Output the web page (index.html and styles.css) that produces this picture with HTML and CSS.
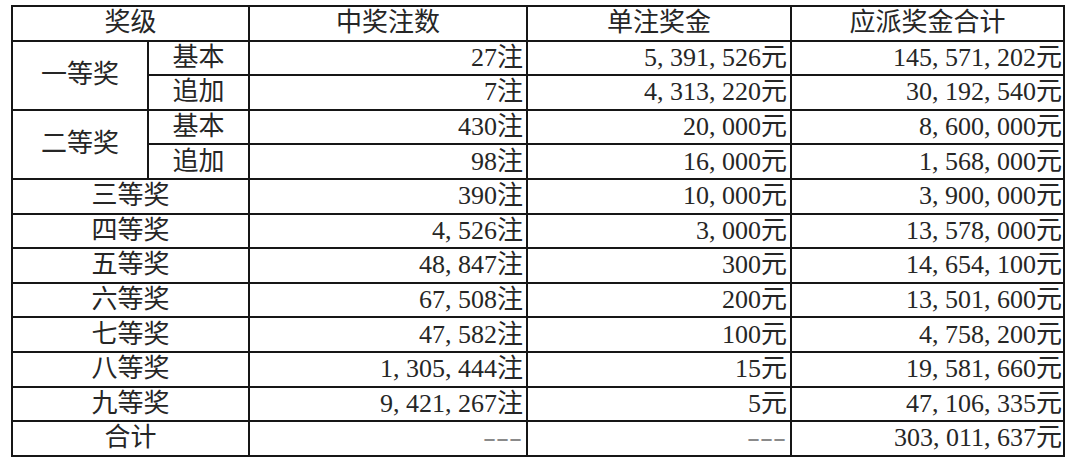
FILE: index.html
```html
<!DOCTYPE html>
<html lang="zh-CN">
<head>
<meta charset="utf-8">
<title>奖级</title>
<link rel="stylesheet" href="styles.css">
</head>
<body>
<div class="table">
  <div class="cell c span2">奖级</div>
  <div class="cell c">中奖注数</div>
  <div class="cell c">单注奖金</div>
  <div class="cell c">应派奖金合计</div>

  <div class="cell c rspan2">一等奖</div>
  <div class="cell c">基本</div>
  <div class="cell r n1">27注</div>
  <div class="cell r n2">5, 391, 526元</div>
  <div class="cell r n3">145, 571, 202元</div>
  <div class="cell c">追加</div>
  <div class="cell r n1">7注</div>
  <div class="cell r n2">4, 313, 220元</div>
  <div class="cell r n3">30, 192, 540元</div>

  <div class="cell c rspan2">二等奖</div>
  <div class="cell c">基本</div>
  <div class="cell r n1">430注</div>
  <div class="cell r n2">20, 000元</div>
  <div class="cell r n3">8, 600, 000元</div>
  <div class="cell c">追加</div>
  <div class="cell r n1">98注</div>
  <div class="cell r n2">16, 000元</div>
  <div class="cell r n3">1, 568, 000元</div>

  <div class="cell c span2">三等奖</div>
  <div class="cell r n1">390注</div>
  <div class="cell r n2">10, 000元</div>
  <div class="cell r n3">3, 900, 000元</div>

  <div class="cell c span2">四等奖</div>
  <div class="cell r n1">4, 526注</div>
  <div class="cell r n2">3, 000元</div>
  <div class="cell r n3">13, 578, 000元</div>

  <div class="cell c span2">五等奖</div>
  <div class="cell r n1">48, 847注</div>
  <div class="cell r n2">300元</div>
  <div class="cell r n3">14, 654, 100元</div>

  <div class="cell c span2">六等奖</div>
  <div class="cell r n1">67, 508注</div>
  <div class="cell r n2">200元</div>
  <div class="cell r n3">13, 501, 600元</div>

  <div class="cell c span2">七等奖</div>
  <div class="cell r n1">47, 582注</div>
  <div class="cell r n2">100元</div>
  <div class="cell r n3">4, 758, 200元</div>

  <div class="cell c span2">八等奖</div>
  <div class="cell r n1">1, 305, 444注</div>
  <div class="cell r n2">15元</div>
  <div class="cell r n3">19, 581, 660元</div>

  <div class="cell c span2">九等奖</div>
  <div class="cell r n1">9, 421, 267注</div>
  <div class="cell r n2">5元</div>
  <div class="cell r n3">47, 106, 335元</div>

  <div class="cell c span2">合计</div>
  <div class="cell r n1"><span class="dash">---</span></div>
  <div class="cell r n2"><span class="dash">---</span></div>
  <div class="cell r n3">303, 011, 637元</div>
</div>
</body>
</html>
```
FILE: styles.css
```css
html, body {
  margin: 0;
  padding: 0;
  background: #ffffff;
}

body {
  padding: 5px 0 0 11px;
  font-family: "Liberation Serif", "Noto Sans CJK SC", serif;
  font-size: 26px;
  color: #262626;
}

.table {
  display: grid;
  width: 1054px;
  box-sizing: border-box;
  grid-template-columns: 134px 99px 276px 262px 271px;
  grid-template-rows: repeat(13, 32.6px);
  gap: 2px;
  padding: 2px;
  background: #161616;
}

.cell {
  background: #ffffff;
  display: flex;
  align-items: center;
  white-space: nowrap;
  line-height: 1;
}

.c {
  justify-content: center;
}

.r {
  justify-content: flex-end;
}

.n1,
.n2 {
  padding-right: 3px;
}

.n3 {
  padding-right: 1px;
}

.span2 {
  grid-column: span 2;
}

.rspan2 {
  grid-row: span 2;
}

.dash {
  display: inline-block;
  color: #8a8a8a;
  transform: scaleX(1.5);
  transform-origin: right center;
  margin-right: 1px;
}
```
